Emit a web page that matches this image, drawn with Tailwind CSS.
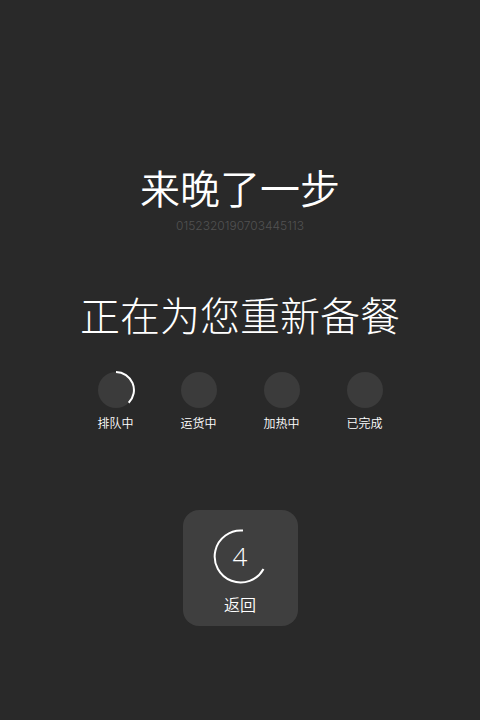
<!DOCTYPE html>
<html lang="zh-CN">
<head>
<meta charset="utf-8">
<meta name="viewport" content="width=device-width, initial-scale=1">
<title>来晚了一步</title>
<script src="https://cdn.jsdelivr.net/npm/@tailwindcss/browser@4"></script>
</head>
<body class="min-h-screen bg-[#292929] text-white font-['Noto_Sans_CJK_SC',sans-serif]">
<main class="flex flex-col items-center pt-[159px] pb-8 font-[350]">
  <h1 class="text-[40px] leading-[56px] font-[350]">来晚了一步</h1>
  <p class="mt-px text-xs leading-5 text-[#525252] font-light font-[Inter,sans-serif]">0152320190703445113</p>
  <h2 class="mt-[50px] text-[40px] leading-[56px] font-light">正在为您重新备餐</h2>
  <ol class="mt-[29px] flex gap-[45px] text-xs leading-5">
    <li class="flex flex-col items-center gap-1">
      <svg class="size-[38px]" viewBox="0 0 38 38" fill="none" aria-hidden="true"><circle cx="19" cy="19" r="18" fill="#3b3b3b"/><path d="M19 1A18 18 0 0 1 31.7 31.7" stroke="#fff" stroke-width="2"/></svg>
      <span>排队中</span>
    </li>
    <li class="flex flex-col items-center gap-1">
      <svg class="size-[38px]" viewBox="0 0 38 38" aria-hidden="true"><circle cx="19" cy="19" r="18" fill="#3b3b3b"/></svg>
      <span>运货中</span>
    </li>
    <li class="flex flex-col items-center gap-1">
      <svg class="size-[38px]" viewBox="0 0 38 38" aria-hidden="true"><circle cx="19" cy="19" r="18" fill="#3b3b3b"/></svg>
      <span>加热中</span>
    </li>
    <li class="flex flex-col items-center gap-1">
      <svg class="size-[38px]" viewBox="0 0 38 38" aria-hidden="true"><circle cx="19" cy="19" r="18" fill="#3b3b3b"/></svg>
      <span>已完成</span>
    </li>
  </ol>
  <button type="button" class="mt-[77px] flex flex-col items-center rounded-2xl bg-[#3f3f3f] px-[30px] pt-[19px] pb-[10px] font-[350]">
    <span class="grid size-[55px] place-items-center">
      <svg class="col-start-1 row-start-1 size-full" viewBox="0 0 55 55" fill="none" stroke="#fff" stroke-width="2" aria-hidden="true"><path d="M30 1.6A26 26 0 1 0 50.5 40"/></svg>
      <span class="col-start-1 row-start-1 pb-[2px] text-[26px] leading-7 font-[350] font-['Open_Sans',sans-serif]">4</span>
    </span>
    <span class="mt-2 text-base leading-6">返回</span>
  </button>
</main>
</body>
</html>
